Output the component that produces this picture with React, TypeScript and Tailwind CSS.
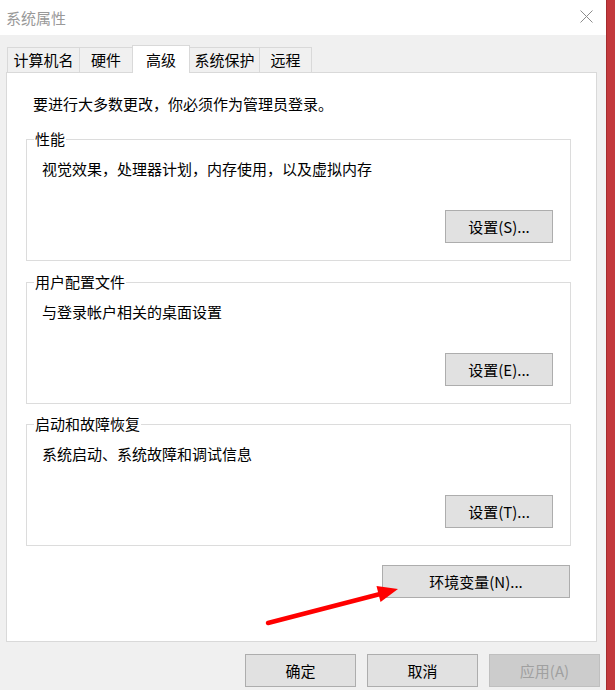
import React from "react";

const FONT = { fontFamily: '"Noto Sans CJK SC", "Noto Sans", sans-serif' };

interface Group {
  title: string;
  desc: string;
  button: string;
}

const groups: Group[] = [
  { title: "性能", desc: "视觉效果，处理器计划，内存使用，以及虚拟内存", button: "设置(S)..." },
  { title: "用户配置文件", desc: "与登录帐户相关的桌面设置", button: "设置(E)..." },
  { title: "启动和故障恢复", desc: "系统启动、系统故障和调试信息", button: "设置(T)..." },
];

const tabs = [
  { label: "计算机名", w: "w-[73px]" },
  { label: "硬件", w: "w-[54px]" },
  { label: "高级", w: "w-[58px]", active: true },
  { label: "系统保护", w: "w-[71px]" },
  { label: "远程", w: "w-[53px]" },
];

function WinButton({ children, className = "", disabled = false }: { children: React.ReactNode; className?: string; disabled?: boolean }) {
  return (
    <button
      className={
        "h-[33px] border text-[15px] leading-[20px] flex items-center justify-center " +
        (disabled
          ? "bg-[#cccccc] border-[#bfbfbf] text-[#a0a0a0] "
          : "bg-[#e1e1e1] border-[#adadad] text-black ") +
        className
      }
    >
      {children}
    </button>
  );
}

export default function App() {
  return (
    <div className="relative w-[615px] h-[690px] flex overflow-hidden text-black" style={FONT}>
      {/* dialog window */}
      <div className="w-[606px] h-full bg-[#f0f0f0] flex flex-col">
        {/* title bar */}
        <div className="h-[35px] bg-white flex items-center justify-between pl-[6px] pr-[13px]">
          <span className="text-[15px] leading-[20px] text-[#999999]">系统属性</span>
          <svg width="13" height="13" viewBox="0 0 13 13" className="mb-[2px]">
            <path d="M0.5 0.5 L12.5 12.5 M12.5 0.5 L0.5 12.5" stroke="#8c8c8c" strokeWidth="1" />
          </svg>
        </div>

        {/* tabs */}
        <div className="h-[37px] flex items-end pl-[7px]">
          {tabs.map((t, i) => (
            <div
              key={t.label}
              className={
                t.w +
                " border-x border-t border-[#d9d9d9] flex items-center justify-center text-[15px] leading-[20px] " +
                (i > 0 ? "-ml-px " : "") +
                (t.active ? "h-[28px] -mb-px bg-white relative z-10" : "h-[25px] bg-[#f0f0f0]")
              }
            >
              {t.label}
            </div>
          ))}
        </div>

        {/* tab page */}
        <div className="ml-[6px] w-[591px] h-[570px] bg-white border border-[#d9d9d9] pl-[19px] pt-[21px] flex flex-col">
          <p className="pl-[7px] text-[15px] leading-[20px]">要进行大多数更改，你必须作为管理员登录。</p>

          {groups.map((g, i) => (
            <fieldset
              key={g.title}
              className={
                "w-[545px] border border-[#dcdcdc] pl-[7px] pr-[17px] pt-[10px] pb-[17px] " +
                (i === 0 ? "mt-[15px]" : i === 1 ? "mt-[11px]" : "mt-[10px]")
              }
            >
              <legend className="px-[1px] text-[15px] leading-[20px]">{g.title}</legend>
              <p className="pl-[8px] text-[15px] leading-[20px]">{g.desc}</p>
              <div className="mt-[31px] flex justify-end">
                <WinButton className="w-[108px]">{g.button}</WinButton>
              </div>
            </fieldset>
          ))}

          <div className="w-[545px] mt-[19px] flex justify-end">
            <WinButton className="w-[188px] mr-[1px]">环境变量(N)...</WinButton>
          </div>
        </div>

        {/* dialog buttons */}
        <div className="mt-[12px] flex justify-end gap-[11px] pr-[6px]">
          <WinButton className="w-[111px]">确定</WinButton>
          <WinButton className="w-[111px]">取消</WinButton>
          <WinButton className="w-[111px]" disabled>
            应用(A)
          </WinButton>
        </div>
      </div>

      {/* red frame edge of the window behind */}
      <div className="flex-1 h-full bg-[#c3393c] border-l border-[#a52b2e]" />

      {/* red annotation arrow */}
      <svg className="absolute left-0 top-0 pointer-events-none" width="615" height="690" viewBox="0 0 615 690">
        <line x1="268" y1="623" x2="384" y2="593" stroke="#ff0000" strokeWidth="4.5" strokeLinecap="round" />
        <polygon points="398,589 380.5,602 376.5,586" fill="#ff0000" />
      </svg>
    </div>
  );
}
